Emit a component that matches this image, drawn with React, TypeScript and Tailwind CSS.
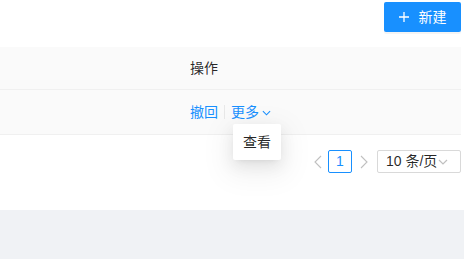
const font = {
  fontFamily: '"Liberation Sans", "Noto Sans CJK SC", sans-serif',
};

function Chevron({ dir, className }: { dir: "left" | "right" | "down"; className?: string }) {
  if (dir === "down") {
    return (
      <svg viewBox="0 0 10 6" className={className} fill="none" stroke="currentColor" strokeWidth={1.2}>
        <polyline points="1,1 5,5 9,1" />
      </svg>
    );
  }
  const pts = dir === "left" ? "7,1 1,7 7,13" : "1,1 7,7 1,13";
  return (
    <svg viewBox="0 0 8 14" className={className} fill="none" stroke="currentColor" strokeWidth={1.1}>
      <polyline points={pts} />
    </svg>
  );
}

export default function App() {
  return (
    <div
      className="relative h-[259px] w-[464px] overflow-hidden bg-white text-[14px] text-[rgba(0,0,0,0.85)]"
      style={font}
    >
      {/* toolbar */}
      <div className="flex h-[47px] items-start justify-end pr-[3px] pt-[2px]">
        <button className="flex h-[30px] w-[77px] items-center justify-center gap-[10px] rounded-[2px] bg-[#1890ff] text-white shadow-[0_2px_0_rgba(0,0,0,0.045)]">
          <svg viewBox="0 0 10 10" className="h-[10px] w-[10px]" stroke="currentColor" strokeWidth={1.3}>
            <path d="M5 0v10M0 5h10" />
          </svg>
          <span>新建</span>
        </button>
      </div>

      {/* table */}
      <div className="mr-[3px]">
        <div className="flex h-[43px] items-center border-b border-[#f0f0f0] bg-[#fafafa] pl-[190px]">
          <span>操作</span>
        </div>
        <div className="flex h-[45px] items-center border-b border-[#f0f0f0] bg-[#fafafa] pl-[190px] text-[#1890ff]">
          <span>撤回</span>
          <span className="mx-[6px] h-[14px] w-px bg-[#e8e8e8]" />
          <span>更多</span>
          <Chevron dir="down" className="ml-[3px] mt-[2px] h-[6px] w-[9px]" />
        </div>
      </div>

      {/* pagination */}
      <div className="flex h-[75px] items-start justify-end pr-[3px] pt-[15px]">
        <div className="flex items-center">
          <Chevron dir="left" className="h-[14px] w-[8px] text-[rgba(0,0,0,0.25)]" />
          <div className="ml-[6px] flex h-[23px] w-[24px] items-center justify-center rounded-[2px] border border-[#1890ff] text-[#1890ff]">
            1
          </div>
          <Chevron dir="right" className="ml-[8px] h-[14px] w-[8px] text-[rgba(0,0,0,0.25)]" />
          <div className="ml-[9px] flex h-[23px] w-[84px] items-center justify-between rounded-[2px] border border-[#d9d9d9] pl-[8px] pr-[12px]">
            <span>10 条/页</span>
            <Chevron dir="down" className="h-[6px] w-[10px] text-[rgba(0,0,0,0.25)]" />
          </div>
        </div>
      </div>

      {/* page background */}
      <div className="h-[49px] bg-[#f0f2f5]" />

      {/* dropdown menu */}
      <div className="absolute left-[233px] top-[124px] flex h-[36px] w-[48px] items-center justify-center rounded-[2px] bg-white shadow-[0_3px_6px_-4px_rgba(0,0,0,0.12),0_6px_16px_0_rgba(0,0,0,0.08),0_9px_28px_8px_rgba(0,0,0,0.05)]">
        查看
      </div>
    </div>
  );
}
